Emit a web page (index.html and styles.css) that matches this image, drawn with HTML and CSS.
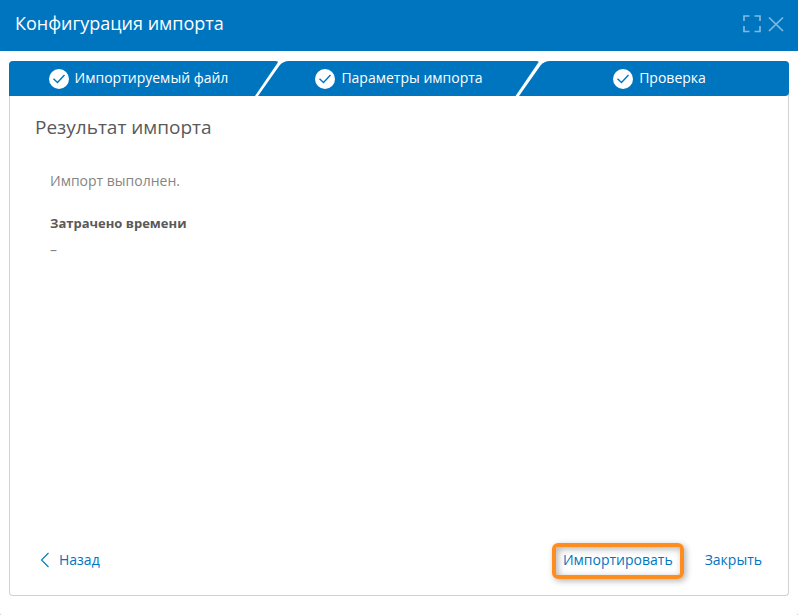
FILE: index.html
```html
<!DOCTYPE html>
<html lang="ru">
<head>
<meta charset="utf-8">
<title>Конфигурация импорта</title>
<link rel="stylesheet" href="styles.css">
</head>
<body>
<div class="dialog">
  <header class="header">
    <h1 class="title">Конфигурация импорта</h1>
    <svg class="tool" width="18" height="18" viewBox="0 0 18 18"><path d="M1 6V1H6.500M11.500 1H17V6M17 11V16.500H11.500M6.500 16.500H1V11"/></svg>
    <svg class="tool" width="16" height="16" viewBox="0 0 16 16"><path d="M1 1.500L15 15M15 1.500L1 15"/></svg>
  </header>
  <main class="panel">
    <nav class="steps">
      <svg class="steps-bg" width="780" height="35" viewBox="0 0 780 35">
        <path d="M4 0H266Q270 0 268.500 2L246 35H0V4Q0 0 4 0Z"/>
        <path d="M280 0H527Q531 0 529 2L506.500 35H249L270.500 4.500Q274 0 280 0Z"/>
        <path d="M541 0H776Q780 0 780 4V31Q780 35 776 35H510L531.500 4.500Q535 0 541 0Z"/>
      </svg>
      <div class="step step-first"><svg class="check" width="20" height="20" viewBox="0 0 20 20"><circle cx="10" cy="10" r="10"/><path d="M4.500 9.800L8.500 13.500L15.500 6"/></svg><span class="step-label">Импортируемый файл</span></div>
      <div class="step"><svg class="check" width="20" height="20" viewBox="0 0 20 20"><circle cx="10" cy="10" r="10"/><path d="M4.500 9.800L8.500 13.500L15.500 6"/></svg><span class="step-label">Параметры импорта</span></div>
      <div class="step step-last"><svg class="check" width="20" height="20" viewBox="0 0 20 20"><circle cx="10" cy="10" r="10"/><path d="M4.500 9.800L8.500 13.500L15.500 6"/></svg><span class="step-label">Проверка</span></div>
    </nav>
    <section class="content">
      <h2 class="heading">Результат импорта</h2>
      <div class="result">
        <p class="message">Импорт выполнен.</p>
        <p class="label">Затрачено времени</p>
        <p class="value">–</p>
      </div>
    </section>
    <footer class="footer">
      <a class="link back"><svg class="chevron" width="10" height="16" viewBox="0 0 10 16"><path d="M8.500 1L1.500 8L8.500 15"/></svg>Назад</a>
      <a class="link import">Импортировать</a>
      <a class="link">Закрыть</a>
    </footer>
  </main>
</div>
</body>
</html>
```
FILE: styles.css
```css
* { box-sizing: border-box; }
html { background: #c4c4c4; }
body { margin: 0; font-family: "Open Sans", "Noto Sans", sans-serif; font-size: 14px; }
h1, h2, p { margin: 0; font-weight: 400; }
svg { display: block; fill: none; flex: none; }

.dialog {
  display: flex;
  flex-direction: column;
  height: 615px;
  padding-bottom: 19px;
  background: #fff;
  border-radius: 0 0 2px 2px;
}
.header {
  display: flex;
  align-items: center;
  height: 51px;
  padding: 0 14px 3px 15px;
  background: #0075bf;
}
.title { flex: 1; padding-bottom: 2px; font-size: 18px; line-height: 24px; color: #fff; }
.tool { margin-left: 7px; stroke: #80badf; stroke-width: 1.7; }

.panel {
  display: flex;
  flex-direction: column;
  flex: 1;
  margin: 10px 9px 0;
  border: 1px solid #d2d2d2;
  border-top: 0;
  border-radius: 4px;
}
.steps { position: relative; display: flex; height: 35px; margin: 0 -1px; }
.steps-bg { position: absolute; left: 0; top: 0; fill: #0075bf; }
.step {
  position: relative;
  display: flex;
  align-items: center;
  justify-content: center;
  gap: 6px;
  width: 260px;
  color: #fff;
}
.step-first { padding-right: 1px; }
.step-last { padding-left: 1px; }
.check circle { fill: #fff; }
.check path { stroke: #0075bf; stroke-width: 1.4; }
.step-label { line-height: 20px; padding-bottom: 2px; }

.content { flex: 1; padding: 18px 25px; }
.heading { font-size: 19px; line-height: 26px; color: #595959; }
.result { padding: 31px 15px 0; color: #858585; }
.message { line-height: 20px; }
.label { margin-top: 23px; font-size: 13px; line-height: 18px; font-weight: 700; color: #595959; }
.value { margin-top: 9px; font-size: 14px; line-height: 18px; }

.footer { display: flex; align-items: center; height: 36px; margin: 0 26px 17px 30px; }
.link { line-height: 20px; color: #0075bf; }
.back { display: flex; align-items: center; gap: 9px; margin-right: auto; }
.chevron { stroke: #0075bf; stroke-width: 1.1; }
.import {
  height: 36px;
  margin: 1px 21px 0 0;
  padding: 3px 7px 5px;
  border: 4px solid #ff8c1f;
  border-radius: 6px;
  box-shadow: 2px 2px 6px rgba(0, 0, 0, .3), inset 2px 2px 7px rgba(0, 0, 0, .3);
}
```
